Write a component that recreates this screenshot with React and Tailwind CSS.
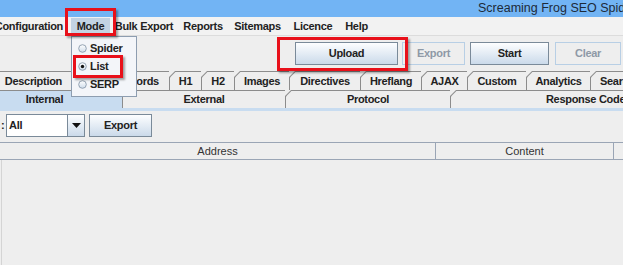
import React from "react";

const font = "font-['Liberation_Sans',Arial,sans-serif]";

const MenuItem = ({ label, w, active }) => (
  <div
    className={`h-[16px] flex items-center justify-center shrink-0 ${w} ${
      active ? "bg-[#c3d3e3]" : ""
    }`}
  >
    {label}
  </div>
);

const Button = ({ label, w, disabled }) => (
  <div
    className={`h-[23px] shrink-0 flex items-center justify-center border ${w} ${
      disabled
        ? "border-[#b8cfe5] bg-[#eeeeee] text-[#8e99a6]"
        : "border-[#7a8a99] bg-linear-to-b from-[#fdfeff] to-[#cbdaea] text-[#222]"
    }`}
  >
    {label}
  </div>
);

const Tab = ({ label, w, selected, extra }) => (
  <div
    className={`h-full shrink-0 pl-px pt-px bg-[#8c8c8c] [clip-path:polygon(6px_0,100%_0,100%_100%,0_100%,0_6px)] ${w} ${
      extra || ""
    }`}
  >
    <div
      className={`h-full flex items-center justify-center whitespace-nowrap [clip-path:polygon(5.4px_0,100%_0,100%_100%,0_100%,0_5.4px)] ${
        selected ? "bg-[#c8dcf0]" : "bg-[#eeeeee]"
      }`}
    >
      {label}
    </div>
  </div>
);

const Radio = ({ checked }) => (
  <svg width="9" height="9" viewBox="0 0 9 9" className="shrink-0">
    <defs>
      <linearGradient id={checked ? "rg1" : "rg0"} x1="0" y1="0" x2="0" y2="1">
        <stop offset="0" stopColor="#ffffff" />
        <stop offset="1" stopColor="#cfdcea" />
      </linearGradient>
    </defs>
    <circle
      cx="4.5"
      cy="4.5"
      r="3.8"
      fill={`url(#${checked ? "rg1" : "rg0"})`}
      stroke="#8a9aab"
      strokeWidth="0.9"
    />
    {checked && <circle cx="4.5" cy="4.5" r="1.7" fill="#111" />}
  </svg>
);

const RedBox = ({ className }) => (
  <div
    className={`absolute border-[3px] border-[#e8101a] shadow-[2px_2px_2px_rgba(0,0,0,0.35)] ${className}`}
  />
);

export default function App() {
  return (
    <div
      className={`relative w-[623px] h-[265px] overflow-hidden bg-[#eeeeee] flex flex-col text-[11px] font-bold tracking-[-0.3px] text-[#222] ${font}`}
    >
      {/* title bar */}
      <div className="h-[17px] shrink-0 bg-[#72b4f4] pl-[478px] overflow-hidden whitespace-nowrap">
        <span className="text-[12.5px] leading-[11px] font-normal tracking-normal text-[#1d2a38]">
          Screaming Frog SEO Spider 3.0
        </span>
      </div>

      {/* menu bar */}
      <div className="h-[19px] shrink-0 flex items-center bg-[#f2f2f2] border-b border-[#dcdcdc] whitespace-nowrap">
        <div className="w-[71px] shrink-0 flex justify-end pr-[8px]">Configuration</div>
        <MenuItem label="Mode" w="w-[39px]" active />
        <MenuItem label="Bulk Export" w="w-[68px]" />
        <MenuItem label="Reports" w="w-[50px]" />
        <MenuItem label="Sitemaps" w="w-[59px]" />
        <MenuItem label="Licence" w="w-[52px]" />
        <MenuItem label="Help" w="w-[35px]" />
      </div>

      {/* toolbar */}
      <div className="h-[35px] shrink-0 flex items-start pt-[6px] pl-[295px]">
        <Button label="Upload" w="w-[103px]" />
        <div className="w-[4px] shrink-0" />
        <Button label="Export" w="w-[63px]" disabled />
        <div className="w-[5px] shrink-0" />
        <Button label="Start" w="w-[79px]" />
        <div className="w-[6px] shrink-0" />
        <Button label="Clear" w="w-[66px]" disabled />
      </div>

      {/* tab row 1 */}
      <div className="h-[19px] shrink-0 flex overflow-hidden">
        <div className="w-[71px] shrink-0 pt-px border-t border-[#8c8c8c] flex items-center justify-end pr-[9px]">
          Description
        </div>
        <Tab label="Meta Keywords" w="w-[98px]" />
        <Tab label="H1" w="w-[32px]" />
        <Tab label="H2" w="w-[33px]" />
        <Tab label="Images" w="w-[55px]" />
        <Tab label="Directives" w="w-[71px]" />
        <Tab label="Hreflang" w="w-[61px]" />
        <Tab label="AJAX" w="w-[46px]" />
        <Tab label="Custom" w="w-[59px]" />
        <Tab label="Analytics" w="w-[64px]" />
        <Tab label="Search Console" w="w-[98px]" />
      </div>

      {/* tab row 2 */}
      <div className="h-[18px] shrink-0 flex overflow-hidden">
        <Tab label="Internal" w="w-[156px]" extra="ml-[-34px]" selected />
        <Tab label="External" w="w-[163px]" />
        <Tab label="Protocol" w="w-[165px]" />
        <Tab label="Response Codes" w="w-[276px]" />
      </div>
      <div className="h-[3px] shrink-0 bg-[#c8dcf0]" />

      {/* filter row */}
      <div className="h-[31px] shrink-0 flex items-start pt-[3px]">
        <span className="w-[6px] shrink-0 leading-[23px] pl-px">:</span>
        <div className="w-[79px] h-[23px] shrink-0 flex border border-[#7a8a99] bg-white">
          <div className="flex-1 flex items-center pl-[2px]">All</div>
          <div className="w-[17px] flex items-center justify-center border-l border-[#7a8a99] bg-linear-to-b from-[#fdfeff] to-[#cbdaea]">
            <svg width="9" height="5" viewBox="0 0 9 5">
              <path d="M0 0 H9 L4.5 5 Z" fill="#111" />
            </svg>
          </div>
        </div>
        <div className="w-[4px] shrink-0" />
        <Button label="Export" w="w-[63px]" />
      </div>

      {/* table header */}
      <div className="h-[18px] shrink-0 flex border-y border-[#9aa5b5] font-normal tracking-normal text-[#333]">
        <div className="w-[436px] shrink-0 flex items-center justify-center border-r border-[#9aa5b5]">
          Address
        </div>
        <div className="w-[178px] shrink-0 flex items-center justify-center border-r border-[#9aa5b5]">
          Content
        </div>
        <div className="flex-1" />
      </div>

      {/* table body */}
      <div className="flex-1 ml-px border-l border-[#d4d4d4] bg-[#eeeeee]" />

      {/* Mode dropdown menu */}
      <div className="absolute left-[71px] top-[36px] w-[66px] h-[61px] bg-[#f3f5f9] border border-[#8d9db0] pt-[2px] z-10">
        <div className="h-[18px] flex items-center pl-[6px] gap-[3px]">
          <Radio />
          <span>Spider</span>
        </div>
        <div className="h-[18px] flex items-center pl-[6px] gap-[3px]">
          <Radio checked />
          <span>List</span>
        </div>
        <div className="h-[18px] flex items-center pl-[6px] gap-[3px]">
          <Radio />
          <span>SERP</span>
        </div>
      </div>

      {/* highlight boxes */}
      <RedBox className="left-[65px] top-[8px] w-[51px] h-[28px] z-20" />
      <RedBox className="left-[73px] top-[55px] w-[50px] h-[23px] z-20" />
      <RedBox className="left-[277px] top-[37px] w-[131px] h-[34px] z-20" />
    </div>
  );
}
